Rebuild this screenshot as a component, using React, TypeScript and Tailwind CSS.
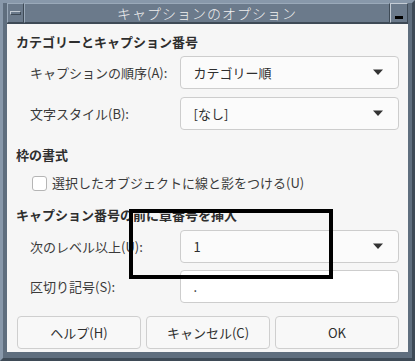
import React from "react";

const font = { fontFamily: '"Noto Sans CJK JP", "Noto Sans", sans-serif' };

function Caret() {
  return (
    <svg width="12" height="7" viewBox="0 0 12 7" className="shrink-0">
      <path d="M1 0.5 L11 0.5 L6 6 Z" fill="#333" />
    </svg>
  );
}

function Combo({ value }: { value: string }) {
  return (
    <div className="flex h-[33px] w-[220px] items-center justify-between rounded-[4px] border border-[#cdcdcd] bg-[#fbfbfb] pl-[13px] pr-[14px] text-[13px] text-[#2e2e2e]">
      <span>{value}</span>
      <Caret />
    </div>
  );
}

function Row({ label, children }: { label: string; children: React.ReactNode }) {
  return (
    <div className="flex items-center">
      <div className="w-[164px] pl-[14px] text-[13px] text-[#3a3a3a]">{label}</div>
      {children}
    </div>
  );
}

function Btn({ label }: { label: string }) {
  return (
    <div className="flex h-[33px] flex-1 items-center justify-center rounded-[4px] border border-[#cfcfcf] bg-[#f8f8f8] text-[13px] text-[#2e2e2e]">
      {label}
    </div>
  );
}

export default function App() {
  return (
    <div className="relative h-[361px] w-[415px] overflow-hidden bg-[#5f6e7e]" style={font}>
      <div className="flex h-full flex-col border-[3px] border-t-[#8898aa] border-l-[#8898aa] border-r-[#3e4a56] border-b-[#3e4a56] px-[4px] pb-[6px] pt-0">
        {/* title bar */}
        <div className="flex h-[21px] items-stretch border-b border-[#3e4a56]">
          <div className="flex w-[17px] items-center justify-center border border-t-[#9aa9b9] border-l-[#9aa9b9] border-r-[#3e4a56] border-b-[#3e4a56] bg-[#6b7a8b]">
            <div className="h-[4px] w-[11px] border border-t-[#c4ccd5] border-l-[#c4ccd5] border-r-[#3e4a56] border-b-[#3e4a56]" />
          </div>
          <div className="flex flex-1 items-center justify-center border border-t-[#9aa9b9] border-l-[#9aa9b9] border-r-[#3e4a56] border-b-[#3e4a56] bg-[#6b7a8b] text-[14px] font-light tracking-[1px] text-[#f0f0f0]">
            キャプションのオプション
          </div>
          <div className="flex w-[18px] items-end justify-center border border-t-[#c4ccd5] border-l-[#c4ccd5] border-r-[#3e4a56] border-b-[#3e4a56] bg-[#6b7a8b] pb-[3px]">
            <div className="h-[3px] w-[8px] bg-black" />
          </div>
        </div>
        {/* content */}
        <div className="flex flex-1 flex-col bg-[#f6f6f6] px-[9px] pt-[8px]">
          <div className="text-[13px] font-bold leading-[20px] text-[#2e2e2e]">カテゴリーとキャプション番号</div>
          <div className="mt-[4px] flex flex-col gap-[8px]">
            <Row label="キャプションの順序(A):">
              <Combo value="カテゴリー順" />
            </Row>
            <Row label="文字スタイル(B):">
              <Combo value="[なし]" />
            </Row>
          </div>
          <div className="mt-[15px] text-[13px] font-bold leading-[20px] text-[#2e2e2e]">枠の書式</div>
          <div className="mt-[8px] flex h-[20px] items-center pl-[16px]">
            <div className="h-[15px] w-[15px] rounded-[3px] border border-[#b5b5b5] bg-white" />
            <span className="ml-[5px] text-[13px] text-[#3a3a3a]">選択したオブジェクトに線と影をつける(U)</span>
          </div>
          <div className="mt-[12px] text-[13px] font-bold leading-[20px] text-[#2e2e2e]">キャプション番号の前に章番号を挿入</div>
          <div className="mt-[5px] flex flex-col gap-[7px]">
            <Row label="次のレベル以上(U):">
              <Combo value="1" />
            </Row>
            <Row label="区切り記号(S):">
              <div className="flex h-[33px] w-[220px] items-center rounded-[4px] border border-[#cdcdcd] bg-white pl-[13px] text-[13px] text-[#2e2e2e]">.</div>
            </Row>
          </div>
          <div className="mt-[13px] flex gap-[5px] pl-[1px]">
            <Btn label="ヘルプ(H)" />
            <Btn label="キャンセル(C)" />
            <Btn label="OK" />
          </div>
        </div>
      </div>
      {/* black annotation rectangle */}
      <div className="absolute left-[129px] top-[209px] h-[70px] w-[204px] border-[4px] border-black" />
    </div>
  );
}
